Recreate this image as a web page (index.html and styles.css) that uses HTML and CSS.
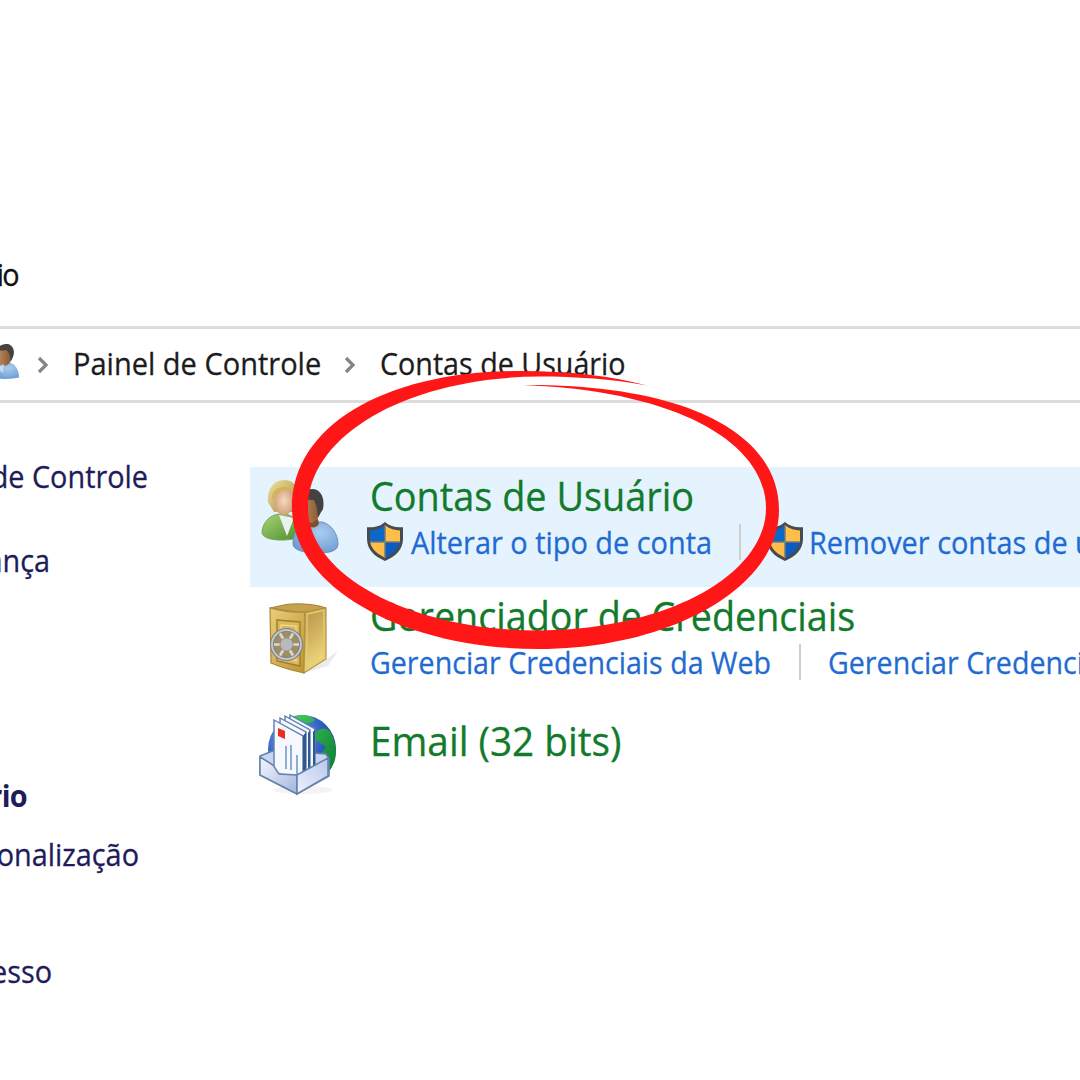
FILE: index.html
```html
<!DOCTYPE html>
<html lang="pt-BR">
<head>
<meta charset="utf-8">
<title>Contas de Usuário</title>
<link rel="stylesheet" href="styles.css">
</head>
<body>
<svg class="defs" width="0" height="0" aria-hidden="true">
  <defs>
    <linearGradient id="hair" x1="0" y1="0" x2="1" y2="1"><stop offset="0" stop-color="#efe2a0"/><stop offset="1" stop-color="#a98a35"/></linearGradient>
    <radialGradient id="face"><stop offset="0" stop-color="#f6d8be"/><stop offset="1" stop-color="#d3a27f"/></radialGradient>
    <linearGradient id="tan" x1="0" y1="0" x2="1" y2="0"><stop offset="0" stop-color="#c09066"/><stop offset="1" stop-color="#85562f"/></linearGradient>
    <linearGradient id="green" x1="0" y1="0" x2="1" y2="1"><stop offset="0" stop-color="#a9d477"/><stop offset="1" stop-color="#4c8c2c"/></linearGradient>
    <radialGradient id="blue" cx=".6" cy=".35" r=".7"><stop offset="0" stop-color="#a9cdf2"/><stop offset="1" stop-color="#6d9bcf"/></radialGradient>
    <linearGradient id="goldFront" x1="0" y1="0" x2="1" y2="1"><stop offset="0" stop-color="#e8cf78"/><stop offset="1" stop-color="#bd9532"/></linearGradient>
    <linearGradient id="goldSide" x1="0" y1="0" x2=".3" y2="1"><stop offset="0" stop-color="#b69548"/><stop offset=".45" stop-color="#cfb05c"/><stop offset="1" stop-color="#f0da82"/></linearGradient>
    <radialGradient id="globe" cx=".35" cy=".3" r=".75"><stop offset="0" stop-color="#7aa4f2"/><stop offset=".6" stop-color="#315fc2"/><stop offset="1" stop-color="#123c8a"/></radialGradient>
    <linearGradient id="land" x1="0" y1="0" x2="1" y2="1"><stop offset="0" stop-color="#43c95b"/><stop offset="1" stop-color="#0a7a35"/></linearGradient>
    <linearGradient id="trayLeft" x1="0" y1="0" x2="1" y2="1"><stop offset="0" stop-color="#f4f7ff"/><stop offset="1" stop-color="#a3b5dd"/></linearGradient>
    <linearGradient id="trayRight" x1="0" y1="1" x2="1" y2="0"><stop offset="0" stop-color="#eef2fd"/><stop offset="1" stop-color="#b9c7ea"/></linearGradient>
    <symbol id="man" viewBox="42 24 48 70">
      <path d="M43 84C43 69 52 61 62 62L72 62C81 64 88 74 88 84C88 93 74 93 65 93C55 93 43 90 43 84Z" fill="url(#blue)" stroke="#6f8fb5" stroke-width="1"/>
      <path d="M57 61L68 59L69 64C66 69 60 68 56 64Z" fill="#80502c"/>
      <ellipse cx="60" cy="47" rx="11" ry="16" fill="url(#tan)"/>
      <path d="M49 40C48 32 55 29 62 29C71 29 75 38 73 49C71 52 69 56 68 57C67 49 67 46 64 40C59 41 54 37 49 40Z" fill="#444240"/>
    </symbol>
    <symbol id="shield" viewBox="0 0 38 40" preserveAspectRatio="none">
      <path d="M19 1C14 5.500 8 6.500 1 6V17C1 28 8 34 19 39C30 34 37 28 37 17V6C30 6.500 24 5.500 19 1Z" fill="#474b50"/>
      <path d="M18.500 4.500C14 8 9 9.200 4 9.200V20H18.500Z" fill="#0c68c8"/>
      <path d="M19.500 4.500C24 8 29 9.200 34 9.200V20H19.500Z" fill="#ffbd4a"/>
      <path d="M4.300 21H18.500V35.500C10 31.500 5.500 27 4.300 21Z" fill="#ffbd4a"/>
      <path d="M33.700 21H19.500V35.500C28 31.500 32.500 27 33.700 21Z" fill="#0b5cc0"/>
      <path d="M4 20.500H34M19 4V36" stroke="#8a9484" stroke-width="1"/>
    </symbol>
  </defs>
</svg>

<div class="window">
  <header class="title"><span class="cut cut-title">io</span></header>
  <nav class="address">
    <svg class="crumb-icon" viewBox="0 0 20 36"><path d="M-8 34C-8 23 0 18 8 18C16 20 19 26 19 33.500Q10 36-8 34Z" fill="url(#blue)"/><ellipse cx="4" cy="12" rx="8" ry="10" fill="url(#tan)"/><path d="M-3 6C-2 1 4 0 8 0C14 2 15 8 13 13L11 17C10 11 9 8 6 6Q2 7-3 6Z" fill="#45413e"/><path d="M-3 24L4 20L3 29Z" fill="#c6dcf1"/></svg>
    <svg class="chevron first" viewBox="0 0 12 18"><path d="M2 2L9 9L2 16"/></svg>
    <span class="crumb control">Painel de Controle</span>
    <svg class="chevron second" viewBox="0 0 12 18"><path d="M2 2L9 9L2 16"/></svg>
    <span class="crumb accounts">Contas de Usuário</span>
  </nav>
  <div class="body">
    <aside class="sidebar">
      <span class="cut cut-home">de Controle</span>
      <span class="cut cut-security">ança</span>
      <span class="cut cut-users">rio</span>
      <span class="cut cut-custom">onalização</span>
      <span class="cut cut-access">esso</span>
    </aside>
    <main class="list">
      <section class="row active">
        <svg class="icon" viewBox="0 0 120 120">
          <path d="M12 72C13 60 23 53 33 54C43 54 51 62 51 76C42 82 12 82 12 72Z" fill="url(#green)" stroke="#7aa35c" stroke-width="1"/>
          <path d="M29 55L37 76L44 58Z" fill="#e9f2ee"/>
          <path d="M18 42C17 30 23 20 34 20C45 20 50 28 48 45L43 52H24Z" fill="url(#hair)"/>
          <ellipse cx="34" cy="41" rx="10" ry="14" fill="url(#face)"/>
          <path d="M22 37C23 27 32 24 45 31C34 29 29 30 22 41Z" fill="#d1b55d"/>
          <use href="#man" x="42" y="24" width="48" height="70"/>
        </svg>
        <div class="details">
          <h2 class="t-users">Contas de Usuário</h2>
          <div class="links">
            <svg class="shield"><use href="#shield"/></svg>
            <a class="l-change">Alterar o tipo de conta</a>
            <i class="bar"></i>
            <svg class="shield near"><use href="#shield"/></svg>
            <a class="l-remove">Remover contas de u</a>
          </div>
        </div>
      </section>
      <section class="row credentials">
        <svg class="icon" viewBox="0 0 120 120">
          <path d="M75 70L88 61L78 76L54 83Z" fill="#777" opacity=".15"/>
          <path d="M20 18L36 14.500C48 13 66 14 76 18L55 23Z" fill="#c5a34a" stroke="#a3853c" stroke-width="1"/>
          <path d="M20 18Q38 23 55 22L54 83Q35 79 21 73Z" fill="url(#goldFront)" stroke="#a88638" stroke-width="1.200"/>
          <path d="M55 22L76 18V69L54 83Z" fill="url(#goldSide)" stroke="#b59240" stroke-width="1.200"/>
          <path d="M57 24L74 20V68L57 79Z" fill="none" stroke="#e6cd74" stroke-width="1.300"/>
          <path d="M27 30L50 32V76L27 71Z" fill="#d8ba5c" stroke="#a17e30" stroke-width="1.500"/>
          <path d="M31 35L46 36V71L31 67Z" fill="none" stroke="#efda88" stroke-width="1.300"/>
          <circle cx="36.500" cy="54.500" r="14.500" fill="#a08e5c" stroke="#808185" stroke-width="4.200"/>
          <circle cx="36.500" cy="54.500" r="14.500" fill="none" stroke="#c4c5c7" stroke-width="2"/>
          <path d="M24 54.500H49M30 43.500L43 65.500M43 43.500L30 65.500" stroke="#d9d9d9" stroke-width="2.600"/>
          <circle cx="36.500" cy="54.500" r="6.500" fill="#b9babd" stroke="#93949a" stroke-width="1"/>
        </svg>
        <div class="details">
          <h2 class="t-credentials">Gerenciador de Credenciais</h2>
          <div class="links">
            <a class="l-web">Gerenciar Credenciais da Web</a>
            <i class="bar"></i>
            <a class="l-windows">Gerenciar Credencia</a>
          </div>
        </div>
      </section>
      <section class="row email">
        <svg class="icon" viewBox="0 0 120 120">
          <ellipse cx="53" cy="90" rx="30" ry="4" fill="#777" opacity=".08"/>
          <circle cx="52" cy="49" r="34" fill="url(#globe)"/>
          <path d="M44 17C51 13 62 16 65 20C60 25 51 23 44 20ZM67 31Q76 25 81 33Q88 46 85 60Q80 75 70 77L65 69L68 57L76 47L69 42L62 39Z" fill="url(#land)"/>
          <path d="M10 56L25 50L76 54L79 59V76L47 94L10 75Z" fill="#c8d5f0" stroke="#6480ab" stroke-width="1.500"/>
          <g fill="#f5f8fe" stroke="#5f7fac" stroke-width="1.400">
            <path d="M40 15L65 29V71L40 58Z"/><path d="M35 16L60 30V73L35 60Z"/><path d="M30 18L56 32V75L30 62Z"/><path d="M24 20L53 36V78L24 73Z"/>
          </g>
          <path d="M53 36L56 32V74L53 77ZM58 33L60 30V72L58 75ZM63 32L65 29V70L63 73Z" fill="#31588e"/>
          <path d="M28 28L35 31V39L28 36Z" fill="#ee2c18"/>
          <path d="M36 46V69M41 45V70M47 55V74" stroke="#7899c4" stroke-width="1.600"/>
          <path d="M10 57L23 65L29 74L47 75V94L10 75Z" fill="url(#trayLeft)" stroke="#6480ab" stroke-width="1.500"/>
          <path d="M47 75L78 58V76L47 94Z" fill="url(#trayRight)" stroke="#6480ab" stroke-width="1.500"/>
        </svg>
        <div class="details"><h2 class="t-email">Email (32 bits)</h2></div>
      </section>
    </main>
  </div>
  <svg class="mark" viewBox="280 360 510 300">
    <path d="M523 385C688 384 779 434 779 510C779 587 671 649 538 649C402 649 292 586 292 508C292 424 388 371 520 371C570 371 612 376 647 385.500C612 379 575 376.500 540 376.500C410 377 308 434 308 508C308 576 412 630.500 538 630.500C664 630.500 766 576 766 508C766 445 682 391 523 385Z" fill="#ff1717"/>
  </svg>
</div>
</body>
</html>
```
FILE: styles.css
```css
* { box-sizing: border-box; }
body { margin: 0; background: #fff; font-family: "Open Sans", "Noto Sans", sans-serif; }
.defs { position: absolute; }
.window { position: relative; width: 1080px; height: 1080px; overflow: hidden; background: #fff; font-size: 31px; line-height: 40px; white-space: nowrap; -webkit-text-stroke: .3px; }
.title { height: 326px; padding-top: 254px; color: #111; }
.cut { display: flex; justify-content: flex-end; height: 40px; transform: scaleX(.93); transform-origin: right; }
.cut-title { width: 18px; letter-spacing: -1.8px; }
.address { display: flex; align-items: center; height: 77px; padding-bottom: 3px; border-top: 3px solid #dcdcdc; border-bottom: 3px solid #dcdcdc; color: #1c1c1c; }
.crumb { flex: none; transform: scaleX(.936); transform-origin: left; }
.accounts { transform: scaleX(.925); }
.crumb-icon { width: 20px; height: 36px; margin-top: -2px; }
.chevron { flex: none; width: 12px; height: 18px; margin-top: 3px; fill: none; stroke: #858585; stroke-width: 3.2; }
.first { margin-left: 17px; margin-right: 24px; }
.control { width: 250px; }
.second { margin-left: 21px; margin-right: 24px; }
.body { display: grid; grid-template-columns: 250px 1fr; }
.sidebar { padding-top: 53px; color: #201c5a; }
.cut-home { width: 148px; }
.cut-security { width: 50px; margin-top: 44px; }
.cut-users { width: 27px; margin-top: 195px; font-weight: 700; letter-spacing: -.7px; -webkit-text-stroke: 0; }
.cut-custom { width: 139px; margin-top: 19px; }
.cut-access { width: 52px; margin-top: 77px; }
.list { padding-top: 64px; min-width: 0; }
.row { display: flex; height: 120px; }
.active { background: #e5f3ff; }
.credentials { height: 126px; }
.icon { flex: none; width: 120px; height: 120px; margin-top: -7px; }
.credentials .icon { margin-top: 3px; }
.email .icon { margin-top: -13px; }
.details { min-width: 0; padding-top: 4px; }
h2 { margin: 0; height: 51px; font-size: 40px; line-height: 50px; font-weight: 400; color: #117b2b; transform: scaleX(.942); transform-origin: left; }
.t-users { transform: scaleX(.946); }
.t-email { transform: scaleX(.968); }
.email h2 { margin-top: -1px; }
.links { display: flex; align-items: center; height: 40px; color: #1f6bd2; }
.links a { flex: none; transform: scaleX(.932); transform-origin: left; }
.links .l-web, .links .l-windows { transform: scaleX(.923); }
.l-change { width: 300px; }
.l-web { width: 401px; }
.shield { flex: none; width: 38px; height: 41px; margin: -1px 7px 0 -4px; }
.near { margin-left: -3px; margin-right: 5px; }
.bar { flex: none; width: 2px; height: 36px; margin: 0 28px; background: #cfcfcf; }
.credentials .bar { margin-right: 27px; }
.mark { position: absolute; left: 280px; top: 360px; width: 510px; height: 300px; }
```
